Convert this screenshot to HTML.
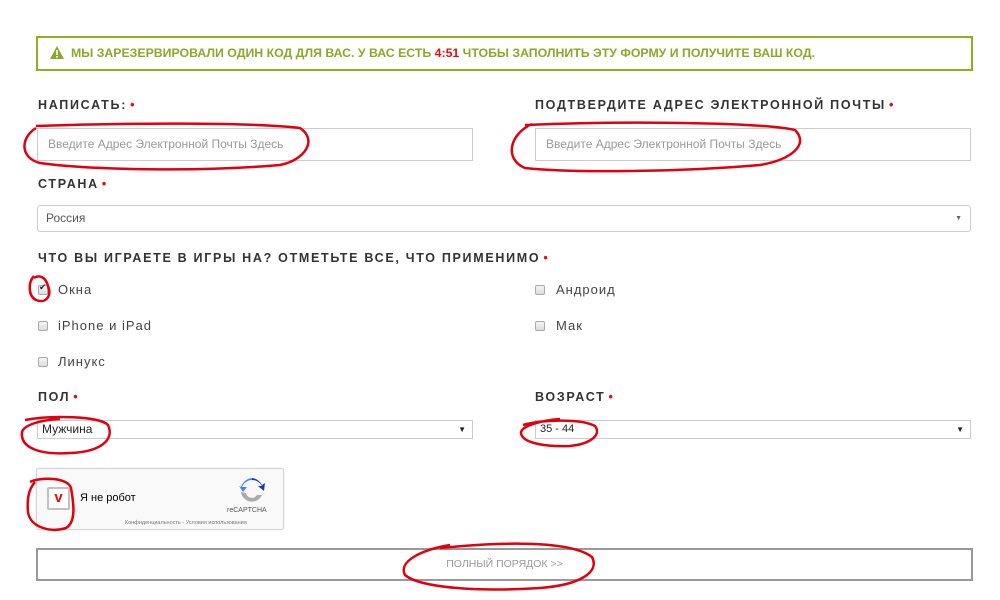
<!DOCTYPE html>
<html><head><meta charset="utf-8"><style>
*{box-sizing:border-box;margin:0;padding:0}
body{width:1000px;height:600px;background:#fff;position:relative;overflow:hidden;font-family:"Liberation Sans",sans-serif}
.a{position:absolute}
.alert{left:36px;top:36px;width:937px;height:35px;border:2px solid #8faf22;color:#8aa82a;font-weight:bold;font-size:12.3px;line-height:31px;padding-left:33px;white-space:nowrap}
.alert b{color:#e01010}
.lbl{font-weight:bold;font-size:12.5px;letter-spacing:1.7px;color:#333;white-space:nowrap}
.lbl i{color:#e01010;font-style:normal;margin-left:3px}
.inp{border:1px solid #ccc;height:33px;font-size:12px;color:#999;line-height:31px;padding-left:10px}
.sel{border:1px solid #ccc;font-size:12px;color:#555;padding-left:8px}
.cb{width:10px;height:10px;border:1px solid #aaa;border-radius:2px;background:linear-gradient(#f4f4f4,#ddd)}
.ct{font-size:13px;letter-spacing:1px;color:#444}
</style></head><body>
<div class="a alert"><svg class="a" style="left:12px;top:8px" width="14" height="13" viewBox="0 0 14 13"><path d="M7 0L14 13H0Z" fill="#8aa82a"/><rect x="6.2" y="4" width="1.6" height="5" fill="#fff"/><rect x="6.2" y="10" width="1.6" height="1.6" fill="#fff"/></svg>МЫ ЗАРЕЗЕРВИРОВАЛИ ОДИН КОД ДЛЯ ВАС. У ВАС ЕСТЬ <b>4:51</b> ЧТОБЫ ЗАПОЛНИТЬ ЭТУ ФОРМУ И ПОЛУЧИТЕ ВАШ КОД.</div>

<div class="a lbl" style="left:38px;top:98px">НАПИСАТЬ:<i>•</i></div>
<div class="a lbl" style="left:535px;top:98px">ПОДТВЕРДИТЕ АДРЕС ЭЛЕКТРОННОЙ ПОЧТЫ<i>•</i></div>
<div class="a inp" style="left:37px;top:128px;width:436px">Введите Адрес Электронной Почты Здесь</div>
<div class="a inp" style="left:535px;top:128px;width:436px">Введите Адрес Электронной Почты Здесь</div>

<div class="a lbl" style="left:38px;top:177px">СТРАНА<i>•</i></div>
<div class="a sel" style="left:37px;top:205px;width:934px;height:27px;line-height:25px;border-radius:3px">Россия<span class="a" style="right:8px;top:0;font-size:7px;color:#666">▼</span></div>

<div class="a lbl" style="left:38px;top:251px">ЧТО ВЫ ИГРАЕТЕ В ИГРЫ НА? ОТМЕТЬТЕ ВСЕ, ЧТО ПРИМЕНИМО<i>•</i></div>
<div class="a cb" style="left:38px;top:285px"><span class="a" style="left:0;top:-4px;font-size:9px;color:#222">✔</span></div>
<div class="a ct" style="left:58px;top:282px">Окна</div>
<div class="a cb" style="left:38px;top:321px"></div><div class="a ct" style="left:58px;top:318px">iPhone и iPad</div>
<div class="a cb" style="left:38px;top:357px"></div><div class="a ct" style="left:58px;top:354px">Линукс</div>
<div class="a cb" style="left:535px;top:285px"></div><div class="a ct" style="left:556px;top:282px">Андроид</div>
<div class="a cb" style="left:535px;top:321px"></div><div class="a ct" style="left:556px;top:318px">Мак</div>

<div class="a lbl" style="left:38px;top:390px">ПОЛ<i>•</i></div>
<div class="a lbl" style="left:535px;top:390px">ВОЗРАСТ<i>•</i></div>
<div class="a sel" style="left:37px;top:420px;width:436px;height:19px;line-height:17px;color:#222;padding-left:4px">Мужчина<span class="a" style="right:6px;top:0;font-size:8px">▼</span></div>
<div class="a sel" style="left:535px;top:420px;width:436px;height:19px;line-height:17px;color:#222;font-size:11px;padding-left:4px">35 - 44<span class="a" style="right:6px;top:0;font-size:8px">▼</span></div>

<div class="a" style="left:36px;top:468px;width:248px;height:62px;border:1px solid #d3d3d3;border-radius:3px;background:#f9f9f9;box-shadow:0 0 2px rgba(0,0,0,.1)">
<div class="a" style="left:10px;top:18px;width:23px;height:23px;border:2px solid #c1c1c1;background:#fff;border-radius:2px;color:#e01010;font-weight:bold;font-size:15px;text-align:center;line-height:18px">v</div>
<div class="a" style="left:43px;top:23px;font-size:11px;color:#000">Я не робот</div>
<svg class="a" style="left:201px;top:8px" width="28" height="28" viewBox="0 0 28 28"><path d="M14 3a11 11 0 0 1 10 6l-4 0 6 5 1-8-3 2A13 13 0 0 0 14 1z" fill="#1c3aa9"/><path d="M14 3A11 11 0 0 0 4 10h5l-4 5-4-6 2 1A13 13 0 0 1 14 1z" fill="#4285f4"/><path d="M3 15a11 11 0 0 0 21 3h-5a6 6 0 0 1-11-2z" fill="#ababab"/></svg>
<div class="a" style="left:190px;top:38px;font-size:7px;color:#555">reCAPTCHA</div>
<div class="a" style="left:88px;top:51px;font-size:5.5px;color:#777;white-space:nowrap">Конфиденциальность - Условия использования</div>
</div>

<div class="a" style="left:36px;top:548px;width:937px;height:33px;border:2px solid #999;text-align:center;line-height:29px;font-size:10.5px;color:#999">ПОЛНЫЙ ПОРЯДОК &gt;&gt;</div>

<svg class="a" style="left:0;top:0" width="1000" height="600" fill="none" stroke="#e00010" stroke-width="2.5">
<path d="M36 126C120 123 250 122 300 128C318 140 305 160 280 165C200 172 90 170 40 163C20 158 20 138 36 128"/>
<path d="M525 125C620 121 760 122 795 130C810 145 790 160 760 165C680 172 570 173 525 168C505 160 508 135 532 124"/>
<path d="M34 276C28 282 28 296 36 300C46 304 52 296 48 286C46 278 40 274 34 278"/>
<path d="M25 420C50 415 100 416 108 425C115 440 100 452 70 453C40 455 20 448 22 432C24 425 40 420 60 419"/>
<path d="M523 425C540 420 580 418 595 426C602 435 590 444 570 446C545 447 522 443 521 433C521 425 545 420 560 419"/>
<path d="M30 482C40 477 68 477 71 488C74 505 76 522 66 528C50 533 30 527 28 512C27 500 28 490 35 482"/>
<path d="M440 548C500 542 570 540 592 557C600 572 580 585 540 588C480 592 420 588 405 575C398 562 420 550 450 545"/>
</svg>
</body></html>
